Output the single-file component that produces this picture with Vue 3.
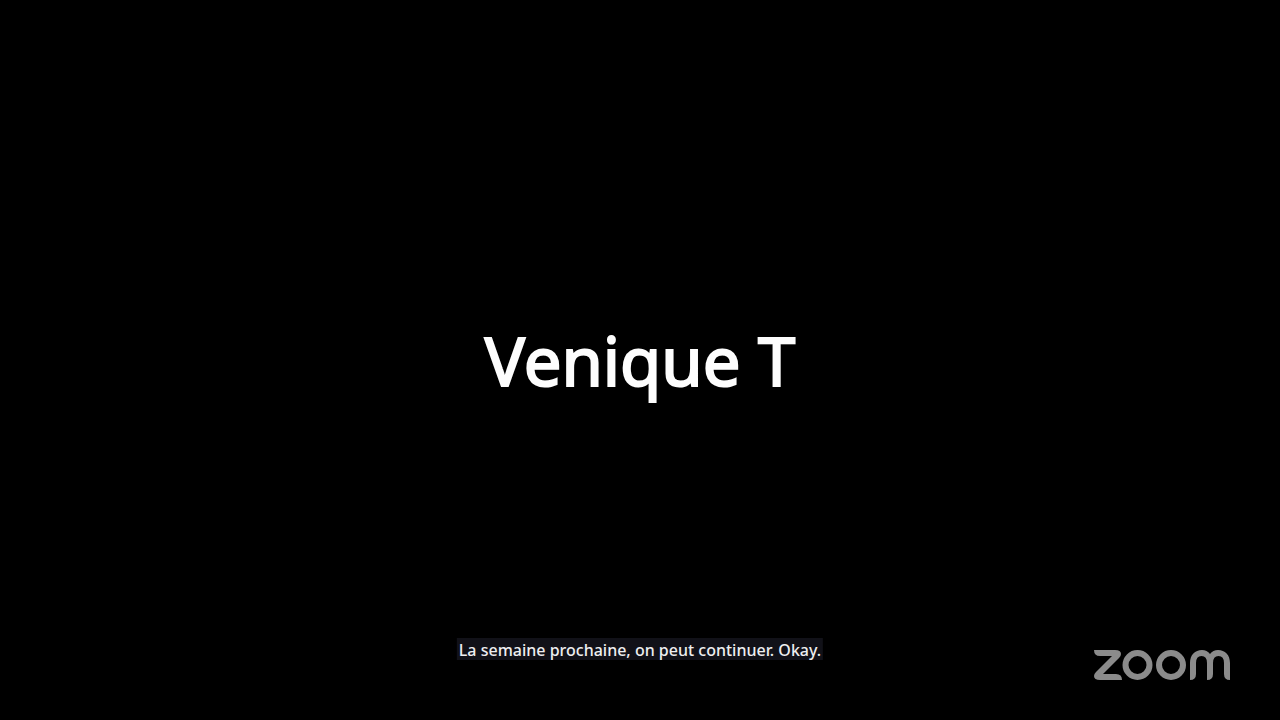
<script setup>
const participant = 'Venique T'
const caption = 'La semaine prochaine, on peut continuer. Okay.'
</script>

<template>
  <main class="stage">
    <h1 class="name">{{ participant }}</h1>
    <p class="caption">{{ caption }}</p>
    <svg class="logo" viewBox="0 0 136 30" role="img" aria-label="zoom">
      <g fill="#8b8b8b">
        <path d="M0 0H21Q27 0 27 4Q27 6 25 8L9 24H22Q28 24 28 30H6Q0 30 0 26Q0 24 2 22L18 6H6Q0 6 0 0Z" />
        <path d="M96 30V13C96 5 101 0 108 0Q113 0 116 4Q119 0 124 0C131 0 136 5 136 13V30Q130 30 130 24V13Q130 6 124.500 6T119 13V24Q119 30 113 30V13Q113 6 107.500 6T102 13V24Q102 30 96 30Z" />
      </g>
      <g fill="none" stroke="#8b8b8b" stroke-width="6">
        <circle cx="43.500" cy="15" r="12" />
        <circle cx="77" cy="15" r="12" />
      </g>
    </svg>
  </main>
</template>

<style>
body {
  background: #000;
}
</style>

<style scoped>
.stage {
  position: relative;
  display: grid;
  place-items: center;
  min-height: 100vh;
  background: #000;
  color: #fdfdfd;
  font-family: "Noto Sans", sans-serif;
}
.name {
  margin: 0;
  font-size: 67px;
  line-height: 92px;
  font-weight: 400;
  -webkit-text-stroke: 2px #fdfdfd;
}
.caption {
  position: absolute;
  bottom: 60px;
  left: 50%;
  transform: translateX(-50%);
  margin: 0;
  padding: 2px 2px 0;
  background: #111118;
  color: #eeeef0;
  font-size: 16px;
  line-height: 20px;
  font-weight: 500;
  white-space: nowrap;
}
.logo {
  position: absolute;
  right: 50px;
  bottom: 40px;
  width: 136px;
  height: 30px;
}
</style>
